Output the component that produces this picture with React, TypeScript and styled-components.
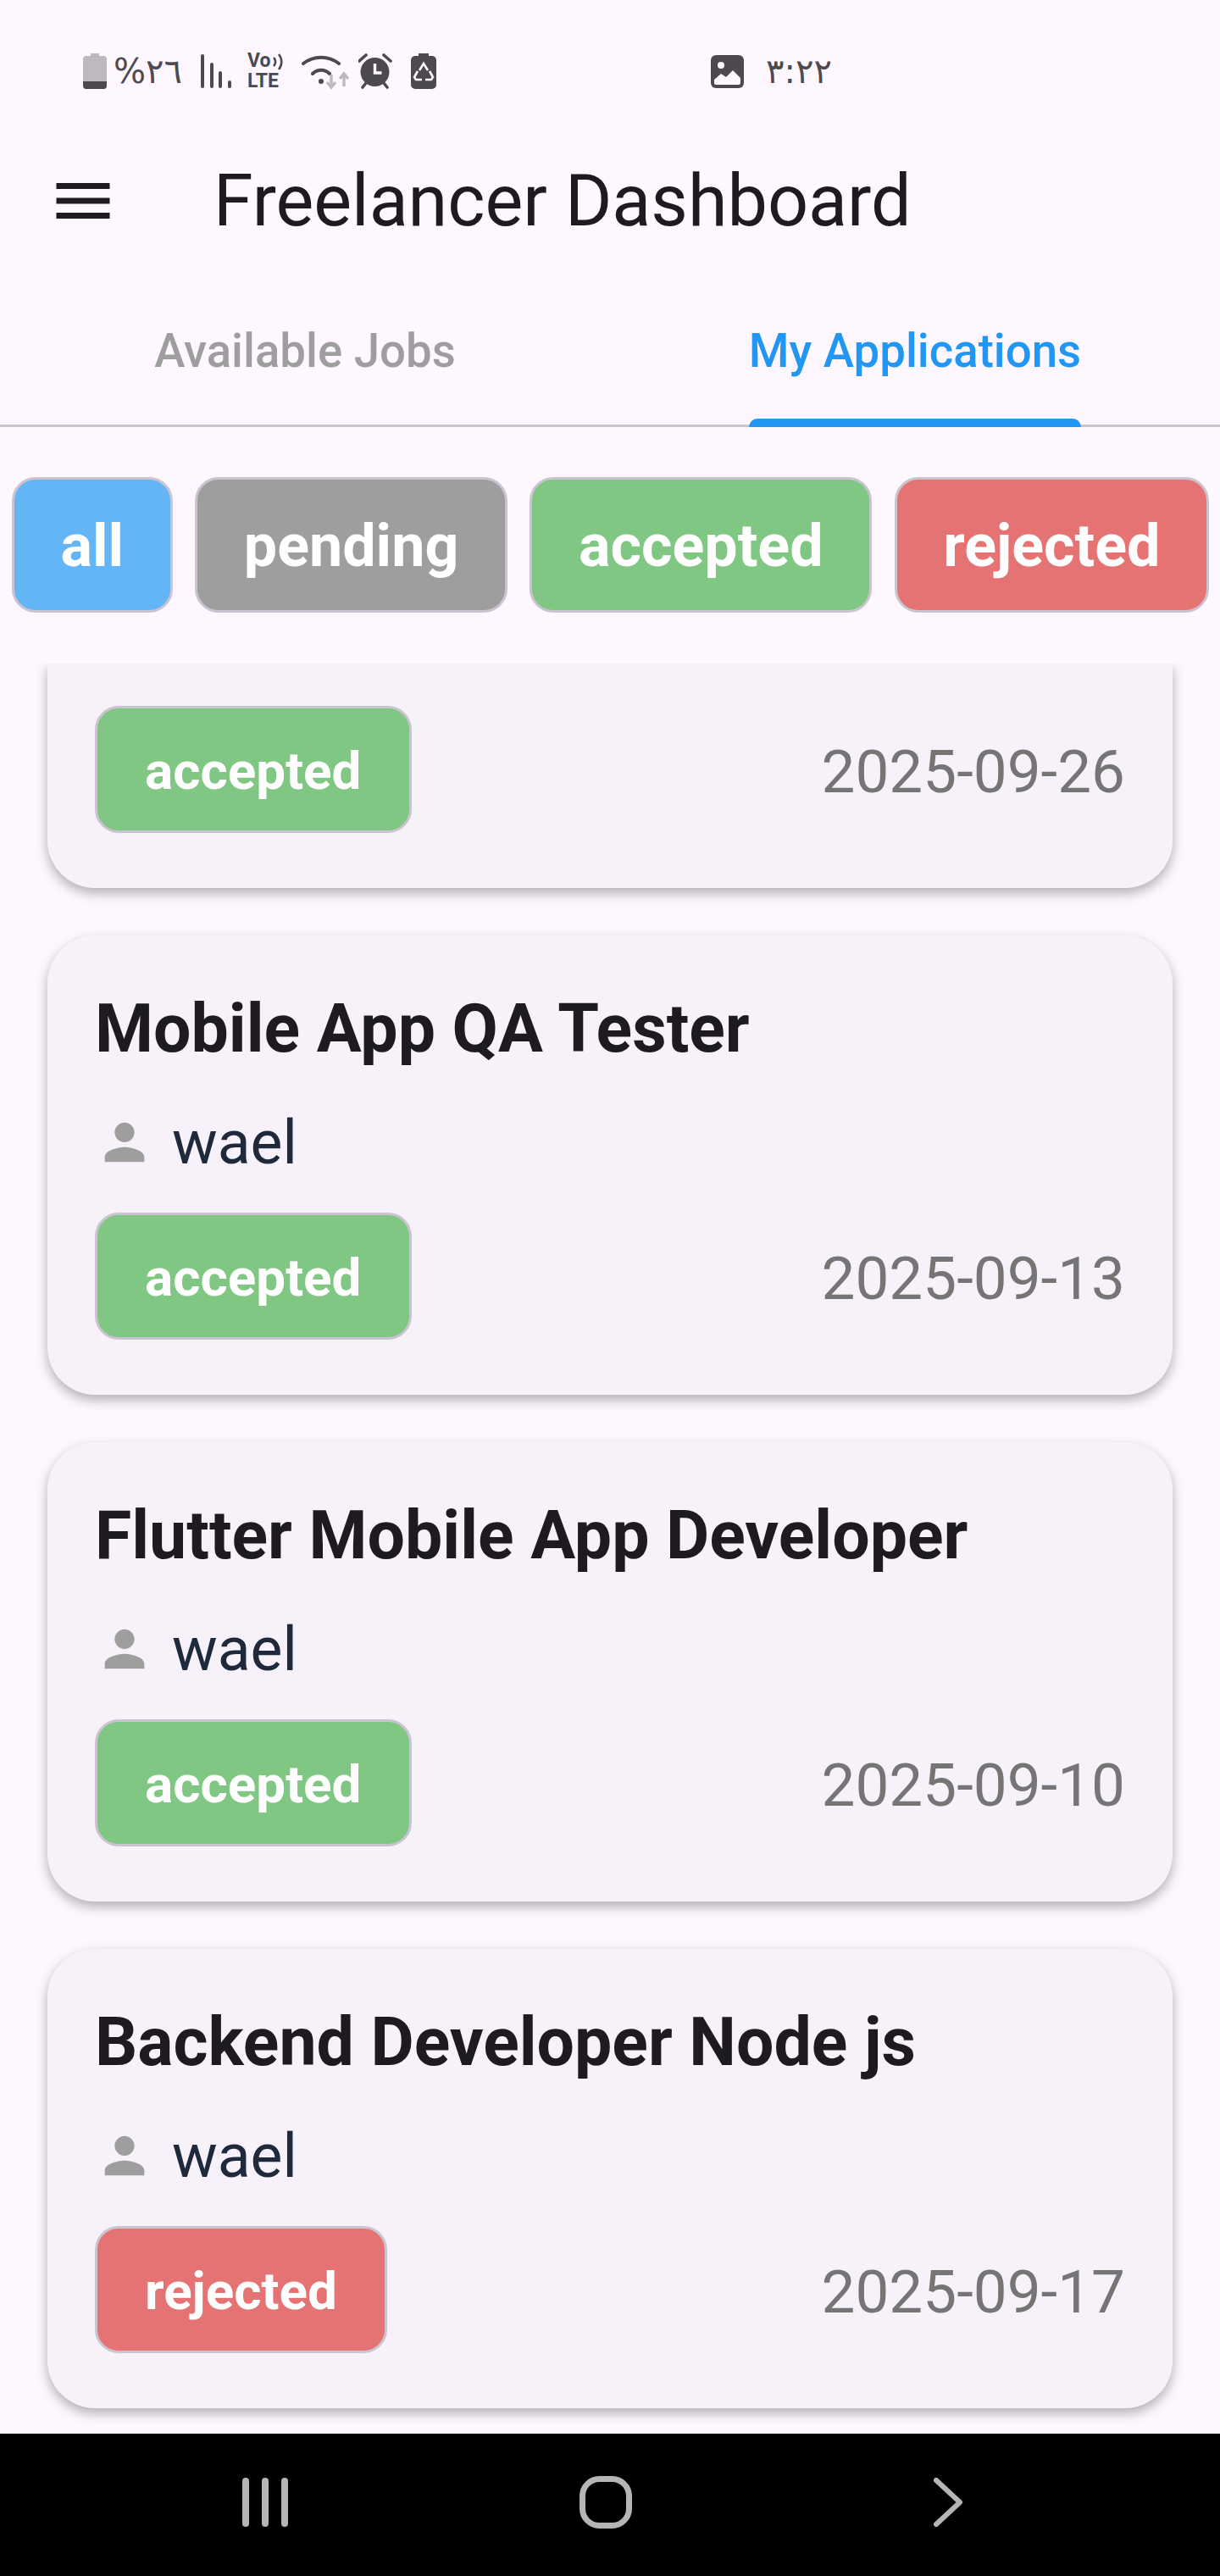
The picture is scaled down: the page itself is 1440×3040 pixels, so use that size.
import React from "react";
import styled, { createGlobalStyle } from "styled-components";

const GlobalStyle = createGlobalStyle`
  html, body { margin: 0; padding: 0; background: #fef7ff; }
  * { box-sizing: border-box; }
`;

const Screen = styled.div`
  width: 1440px;
  height: 3040px;
  display: flex;
  flex-direction: column;
  background: #fef7ff;
  font-family: Roboto, "Noto Sans", sans-serif;
  overflow: hidden;
`;

const StatusBar = styled.div`
  height: 154px;
  flex: none;
  display: flex;
  align-items: flex-start;
  padding: 62px 0 0 98px;
  color: #4d4a4f;
`;

const StatusLeft = styled.div`
  width: 741px;
  display: flex;
  align-items: center;
  height: 44px;
`;

const StatusRight = styled.div`
  display: flex;
  align-items: center;
  height: 44px;
  gap: 26px;
`;

const StatusText = styled.span<{ $gap?: number }>`
  font-family: "DejaVu Sans", sans-serif;
  font-size: 40px;
  line-height: 44px;
  color: #4d4a4f;
  direction: ltr;
  unicode-bidi: plaintext;
  margin-left: ${(p) => p.$gap ?? 0}px;
`;

const StatusSvg = styled.svg<{ $gap?: number }>`
  display: block;
  flex: none;
  margin-left: ${(p) => p.$gap ?? 0}px;
`;

const VoLte = styled.div`
  width: 42px;
  margin-left: 19px;
  position: relative;
  display: flex;
  flex-direction: column;
  font-weight: 700;
  font-size: 23px;
  line-height: 24px;
  color: #4d4a4f;
`;

const VoArc = styled.svg`
  position: absolute;
  top: 2px;
  right: -2px;
`;

const Header = styled.header`
  height: 166px;
  flex: none;
  display: flex;
  align-items: center;
  padding-left: 56px;
`;

const MenuIcon = styled.svg`
  flex: none;
  display: block;
`;

const Title = styled.h1`
  margin: 0 0 0 112px;
  font-size: 84.5px;
  font-weight: 400;
  color: #1d1b20;
`;

const Tabs = styled.nav`
  height: 184px;
  flex: none;
  display: grid;
  grid-template-columns: 1fr 1fr;
  border-bottom: 3px solid #cac4d0;
`;

const Tab = styled.div`
  display: flex;
  justify-content: center;
  height: 181px;
  padding-top: 64px;
  font-size: 54.6px;
  line-height: 60px;
  font-weight: 500;
`;

const TabLabel = styled.span<{ $active?: boolean }>`
  position: relative;
  height: 117px;
  color: ${(p) => (p.$active ? "#2196f3" : "#9e9e9e")};
  &::after {
    content: "";
    display: ${(p) => (p.$active ? "block" : "none")};
    position: absolute;
    left: 0;
    right: 0;
    bottom: -3px;
    height: 10px;
    border-radius: 10px 10px 0 0;
    background: #2196f3;
  }
`;

const Filters = styled.div`
  flex: none;
  display: flex;
  gap: 26.5px;
  padding: 59px 0 60px 14px;
`;

const statusColors = {
  all: "#64b5f6",
  pending: "#9e9e9e",
  accepted: "#81c784",
  rejected: "#e57373",
};

type Status = keyof typeof statusColors;

const FilterChip = styled.div<{ $status: Status }>`
  height: 160px;
  flex: none;
  display: flex;
  align-items: center;
  padding: 2px 54.6px 0;
  border: 3.5px solid #cac4d0;
  border-radius: 28px;
  background: ${(p) => statusColors[p.$status]};
  color: #fff;
  font-size: 70px;
  font-weight: 700;
`;

const ListClip = styled.div`
  flex: 1;
  min-height: 0;
  overflow: hidden;
`;

const List = styled.div`
  display: flex;
  flex-direction: column;
  gap: 56px;
  padding: 0 56px;
`;

const Card = styled.article`
  height: 542px;
  flex: none;
  padding: 56px 56px 65px;
  display: flex;
  flex-direction: column;
  border-radius: 56px;
  background: #f7f2fa;
  box-shadow: 0 6px 14px rgba(0, 0, 0, 0.3);
`;

// first card is scrolled under the filters, only its footer shows
const ScrolledCard = styled(Card)`
  height: 265px;
  padding-top: 4px;
  border-radius: 0 0 56px 56px;
`;

const CardTitle = styled.h2`
  margin: 0;
  height: 102px;
  line-height: 108px;
  font-size: 78.8px;
  font-weight: 700;
  color: #1d1b20;
`;

const Owner = styled.div`
  margin-top: 49px;
  height: 74px;
  display: flex;
  align-items: center;
  gap: 21px;
  font-size: 71.5px;
  color: #1e293b;
`;

const CardFooter = styled.div`
  margin-top: 46px;
  display: flex;
  align-items: center;
  justify-content: space-between;
`;

const Badge = styled.div<{ $status: Status }>`
  height: 150px;
  display: flex;
  align-items: center;
  padding: 3px 56px 0;
  border: 3.5px solid #cac4d0;
  border-radius: 28px;
  background: ${(p) => statusColors[p.$status]};
  color: #fff;
  font-size: 62px;
  font-weight: 700;
`;

const DateText = styled.span`
  padding-top: 4px;
  font-size: 71px;
  color: #757575;
`;

const NavBar = styled.div`
  height: 168px;
  flex: none;
  background: #000;
  display: flex;
  align-items: center;
  padding: 0 0 6px 286px;
`;

const NavIcon = styled.svg<{ $left?: number }>`
  display: block;
  flex: none;
  margin-left: ${(p) => p.$left ?? 0}px;
`;

const jobs: { title: string; status: Status; date: string }[] = [
  { title: "Mobile App QA Tester", status: "accepted", date: "2025-09-13" },
  { title: "Flutter Mobile App Developer", status: "accepted", date: "2025-09-10" },
  { title: "Backend Developer Node js", status: "rejected", date: "2025-09-17" },
];

const PersonIcon = () => (
  <svg width="70" height="70" viewBox="0 0 24 24" fill="#9e9e9e" style={{ flex: "none" }}>
    <path d="M12 12c2.21 0 4-1.79 4-4s-1.79-4-4-4-4 1.79-4 4 1.79 4 4 4zm0 2c-2.67 0-8 1.34-8 4v2h16v-2c0-2.66-5.33-4-8-4z" />
  </svg>
);

const App = () => (
  <Screen>
    <GlobalStyle />
    <StatusBar>
      <StatusLeft>
        <StatusSvg width="28" height="42" viewBox="0 0 28 42">
          <path d="M9 0h10v3h5a4 4 0 0 1 4 4v31a4 4 0 0 1-4 4H4a4 4 0 0 1-4-4V7a4 4 0 0 1 4-4h5z" fill="#bdb9be" />
          <path d="M0 33h28v5a4 4 0 0 1-4 4H4a4 4 0 0 1-4-4z" fill="#4d4a4f" />
        </StatusSvg>
        <StatusText $gap={8}>%٢٦</StatusText>
        <StatusSvg $gap={22} width="36" height="40" viewBox="0 0 36 40">
          <g fill="#4d4a4f">
            <rect x="0" y="0" width="4" height="40" rx="2" />
            <rect x="11" y="10" width="4" height="30" rx="2" />
            <rect x="21" y="20" width="4" height="20" rx="2" />
            <rect x="32" y="31" width="4" height="9" rx="2" />
          </g>
        </StatusSvg>
        <VoLte>
          <span>Vo</span>
          <span>LTE</span>
          <VoArc width="14" height="22" viewBox="0 0 14 22" fill="none" stroke="#4d4a4f" strokeWidth="2.6">
            <path d="M1 6a7 7 0 0 1 0 10M7 2a14 14 0 0 1 0 18" />
          </VoArc>
        </VoLte>
        <StatusSvg $gap={22} width="56" height="44" viewBox="0 0 56 44" fill="none">
          <path d="M2 13a34 34 0 0 1 42 0M13 25a14 14 0 0 1 20 0" stroke="#4d4a4f" strokeWidth="4" strokeLinecap="round" />
          <circle cx="23" cy="34" r="3" fill="#4d4a4f" />
          <path d="M35 26v15M30 35l5 6 5-6M50 40V25M45 31l5-6 5 6" stroke="#bdb9be" strokeWidth="3.4" />
        </StatusSvg>
        <StatusSvg $gap={11} width="40" height="42" viewBox="0 0 40 42">
          <circle cx="19.5" cy="22" r="17" fill="#4d4a4f" />
          <path d="M19.5 12v11h8" fill="none" stroke="#fef7ff" strokeWidth="3.4" />
          <path d="M1 9l8-7M38 9l-8-7M5 40l4-5M34 40l-4-5" stroke="#4d4a4f" strokeWidth="3.6" strokeLinecap="round" />
        </StatusSvg>
        <StatusSvg $gap={22} width="30" height="42" viewBox="0 0 30 42">
          <path d="M9 0h12v3h4a5 5 0 0 1 5 5v29a5 5 0 0 1-5 5H5a5 5 0 0 1-5-5V8a5 5 0 0 1 5-5h4z" fill="#4d4a4f" />
          <path d="M10 20l5-8 5 8M22 21l4 7-2 3h-7M13 31H6l-2-3 4-7" fill="none" stroke="#fef7ff" strokeWidth="2.6" />
        </StatusSvg>
      </StatusLeft>
      <StatusRight>
        <StatusSvg width="39" height="39" viewBox="0 0 39 39">
          <rect width="39" height="39" rx="6" fill="#4d4a4f" />
          <circle cx="12" cy="12" r="4" fill="#fef7ff" />
          <path d="M4 33v-4l8-7 6 4 8-8 9 9v6a2 2 0 0 1-2 2H6a2 2 0 0 1-2-2z" fill="#fef7ff" />
        </StatusSvg>
        <StatusText>٣:٢٢</StatusText>
      </StatusRight>
    </StatusBar>
    <Header>
      <MenuIcon width="84" height="84" viewBox="0 0 24 24" fill="#1d1b20">
        <path d="M3 18h18v-2H3v2zm0-5h18v-2H3v2zm0-7v2h18V6H3z" />
      </MenuIcon>
      <Title>Freelancer Dashboard</Title>
    </Header>
    <Tabs>
      <Tab>
        <TabLabel>Available Jobs</TabLabel>
      </Tab>
      <Tab>
        <TabLabel $active>My Applications</TabLabel>
      </Tab>
    </Tabs>
    <Filters>
      <FilterChip $status="all">all</FilterChip>
      <FilterChip $status="pending">pending</FilterChip>
      <FilterChip $status="accepted">accepted</FilterChip>
      <FilterChip $status="rejected">rejected</FilterChip>
    </Filters>
    <ListClip>
      <List>
        <ScrolledCard>
          <CardFooter>
            <Badge $status="accepted">accepted</Badge>
            <DateText>2025-09-26</DateText>
          </CardFooter>
        </ScrolledCard>
        {jobs.map((job) => (
          <Card key={job.title}>
            <CardTitle>{job.title}</CardTitle>
            <Owner>
              <PersonIcon />
              wael
            </Owner>
            <CardFooter>
              <Badge $status={job.status}>{job.status}</Badge>
              <DateText>{job.date}</DateText>
            </CardFooter>
          </Card>
        ))}
      </List>
    </ListClip>
    <NavBar>
      <NavIcon width="55" height="58" viewBox="0 0 55 58" fill="#b5b5b5">
        <rect x="0" y="0" width="8" height="58" rx="4" />
        <rect x="23" y="0" width="8" height="58" rx="4" />
        <rect x="46" y="0" width="8" height="58" rx="4" />
      </NavIcon>
      <NavIcon $left={343} width="62" height="62" viewBox="0 0 62 62" fill="none">
        <rect x="3.5" y="3.5" width="55" height="55" rx="20" stroke="#b5b5b5" strokeWidth="7" />
      </NavIcon>
      <NavIcon $left={356} width="34" height="58" viewBox="0 0 34 58" fill="none">
        <path d="M3 3l28 26L3 55" stroke="#b5b5b5" strokeWidth="6" strokeLinecap="round" strokeLinejoin="round" />
      </NavIcon>
    </NavBar>
  </Screen>
);

export default App;
